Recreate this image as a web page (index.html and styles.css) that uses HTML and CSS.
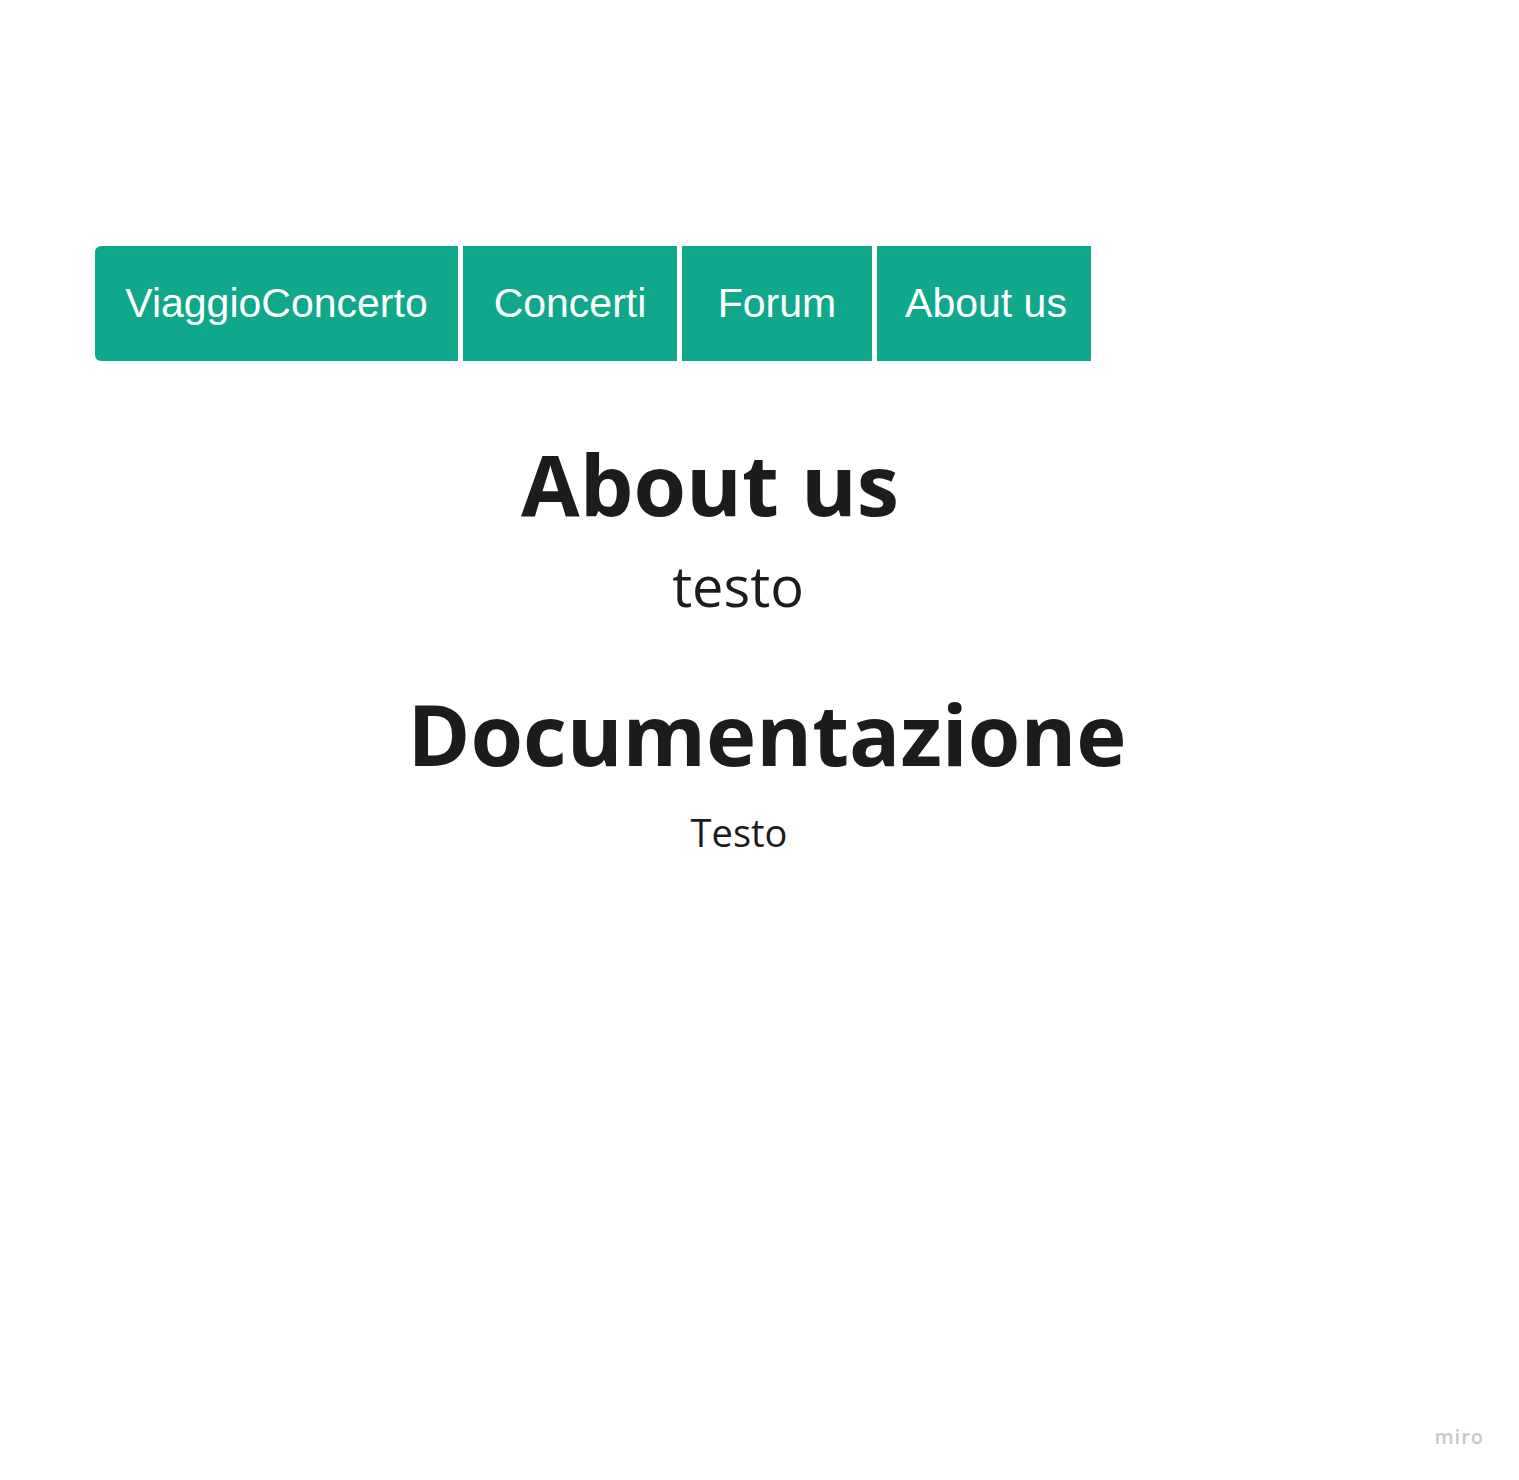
FILE: index.html
```html
<!DOCTYPE html>
<html lang="it">
<head>
<meta charset="utf-8">
<title>ViaggioConcerto - About us</title>
<link rel="stylesheet" href="styles.css">
</head>
<body>
<div class="board">
  <nav class="nav">
    <a class="nav-item nav-item--brand" href="#">ViaggioConcerto</a>
    <a class="nav-item nav-item--concerti" href="#">Concerti</a>
    <a class="nav-item nav-item--forum" href="#">Forum</a>
    <a class="nav-item nav-item--about" href="#">About us</a>
  </nav>
  <main class="content">
    <h1 class="title title--about">About us</h1>
    <p class="text text--about">testo</p>
    <h2 class="title title--docs">Documentazione</h2>
    <p class="text text--docs">Testo</p>
  </main>
  <div class="watermark">miro</div>
</div>
</body>
</html>
```

FILE: styles.css
```css
html, body {
  margin: 0;
  padding: 0;
  background: #ffffff;
}

.board {
  position: relative;
  min-height: 1480px;
  padding-top: 246px;
  box-sizing: border-box;
  font-family: "Open Sans", "Noto Sans", sans-serif;
  color: #1c1c1c;
}

.nav {
  display: flex;
  gap: 5px;
  margin-left: 95px;
  height: 115px;
}

.nav-item {
  display: flex;
  align-items: center;
  justify-content: center;
  background: #0fa88a;
  color: #ffffff;
  text-decoration: none;
  font-family: "Liberation Sans", Arial, sans-serif;
  font-size: 41px;
}

.nav-item--brand {
  width: 363px;
  border-radius: 6px 0 0 6px;
}

.nav-item--concerti { width: 214px; }
.nav-item--forum { width: 190px; }
.nav-item--about { width: 214px; padding-left: 4px; box-sizing: border-box; }

.content {
  display: flex;
  flex-direction: column;
}

.title {
  margin: 0;
  font-weight: 700;
  font-size: 85px;
  line-height: 1;
  width: 800px;
  text-align: center;
}

.text {
  margin: 0;
  font-weight: 400;
  line-height: 1;
  width: 800px;
  text-align: center;
}

.title--about {
  margin-top: 80px;
  margin-left: 310px;
}

.text--about {
  margin-top: 31px;
  margin-left: 338px;
  font-size: 56px;
}

.title--docs {
  margin-top: 78px;
  margin-left: 367px;
}

.text--docs {
  margin-top: 37px;
  margin-left: 339px;
  font-size: 38px;
}

.watermark {
  position: absolute;
  right: 35px;
  bottom: 30px;
  font-family: "Open Sans", sans-serif;
  font-weight: 600;
  font-size: 20px;
  letter-spacing: 1px;
  color: #c5c8d3;
}
```
